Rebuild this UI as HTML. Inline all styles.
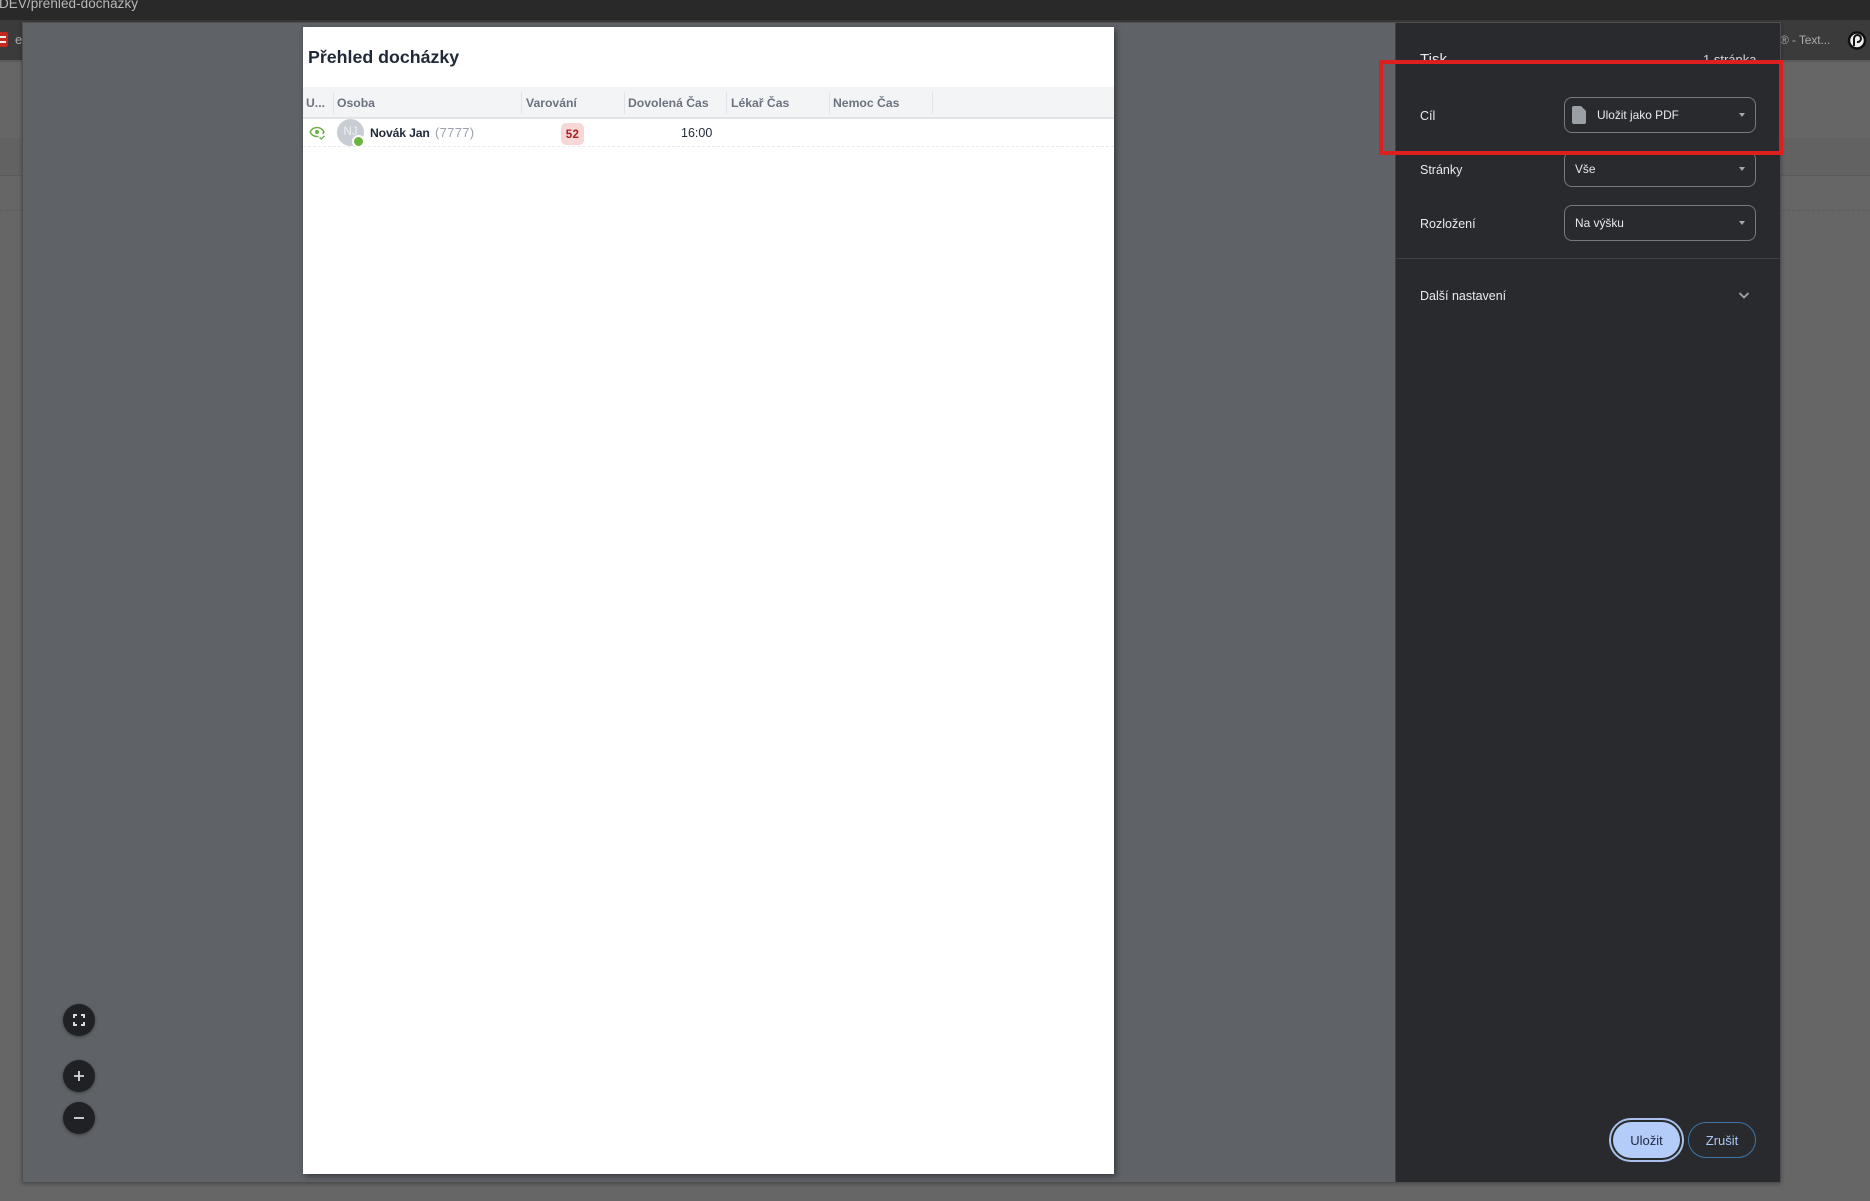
<!DOCTYPE html>
<html lang="cs"><head><meta charset="utf-8"><title>Tisk</title>
<style>
*{box-sizing:border-box;margin:0;padding:0}
html,body{width:1870px;height:1201px;overflow:hidden;background:#666;font-family:"Liberation Sans",sans-serif}
.a{position:absolute;white-space:nowrap}
.sel{position:absolute;left:1564px;width:192px;height:36px;border:1px solid #77797d;border-radius:8px;color:#e8eaed;font-size:11.9px;line-height:35px;padding-left:10px}
.sel i{position:absolute;right:10px;top:15px;width:0;height:0;border-left:3.500px solid transparent;border-right:3.500px solid transparent;border-top:4px solid #a5a7aa}
.lab{position:absolute;left:1420px;color:#e8eaed;font-size:12.5px;white-space:nowrap}
.th{position:absolute;top:95px;color:#6b7280;font-size:12.2px;font-weight:bold;line-height:16px;white-space:nowrap}
.sep{position:absolute;top:92px;width:1px;height:22px;background:#e1e3e8}
.fab{position:absolute;left:63px;width:32px;height:32px;border-radius:50%;background:#202124;box-shadow:0 1px 3px rgba(0,0,0,.4)}
</style></head><body>
<div class="a" style="left:0;top:0;width:1870px;height:20px;background:#292929"></div>
<div class="a" style="left:0;top:20px;width:1870px;height:40px;background:#3b3b3b"></div>
<div class="a" style="left:0;top:60px;width:1870px;height:2px;background:#5a5a5a"></div>
<div class="a" style="left:0;top:138px;width:1870px;height:37px;background:#626262"></div>
<div class="a" style="left:0;top:175px;width:1870px;height:1px;background:#5a5a5a"></div>
<div class="a" style="left:0;top:210px;width:1870px;border-top:1px dashed #5c5c5c"></div>
<div class="a" style="left:-1px;top:-4px;color:#b8b8b8;font-size:13.5px;line-height:16px;letter-spacing:.05px">DEV/přehled-docházky</div>
<div class="a" style="left:0;top:32px;width:8px;height:15px;background:#c5281f;border-radius:0 2px 2px 0"></div>
<div class="a" style="left:0;top:36px;width:6px;height:2px;background:#eee"></div>
<div class="a" style="left:0;top:41px;width:6px;height:2px;background:#eee"></div>
<div class="a" style="left:15px;top:32px;color:#aaa;font-size:13px">e</div>
<div class="a" style="left:1780px;top:32px;color:#aaa;font-size:12px;line-height:16px;letter-spacing:-.1px">® - Text...</div>
<svg class="a" style="left:1847px;top:31px" width="20" height="19" viewBox="0 0 20 19"><circle cx="10" cy="9.500" r="8" fill="#eee" stroke="#111" stroke-width="2.500"/><path d="M7 15V7.500a3.500 3.500 0 1 1 3 3.500" fill="none" stroke="#111" stroke-width="2"/></svg>

<div class="a" style="left:22px;top:22px;width:1759px;height:1161px;background:#5f6368;border:1px solid #4e4f50;box-shadow:0 1px 4px rgba(0,0,0,.3)"></div>
<div class="a" style="left:303px;top:27px;width:811px;height:1147px;background:#fff;box-shadow:2px 2px 6px rgba(0,0,0,.45)"></div>

<div class="a" style="left:308px;top:46px;color:#1f2937;font-size:17.8px;font-weight:bold;line-height:22px">Přehled docházky</div>
<div class="a" style="left:303px;top:87px;width:811px;height:30px;background:#f3f4f6"></div>
<div class="a" style="left:303px;top:117px;width:811px;height:2px;background:#e3e4e8"></div>
<div class="th" style="left:306px">U...</div>
<div class="sep" style="left:333px"></div>
<div class="th" style="left:337px">Osoba</div>
<div class="sep" style="left:521px"></div>
<div class="th" style="left:526px">Varování</div>
<div class="sep" style="left:624px"></div>
<div class="th" style="left:628px">Dovolená Čas</div>
<div class="sep" style="left:726px"></div>
<div class="th" style="left:731px">Lékař Čas</div>
<div class="sep" style="left:829px"></div>
<div class="th" style="left:833px">Nemoc Čas</div>
<div class="sep" style="left:932px"></div>

<svg class="a" style="left:309px;top:125px" width="17" height="16" viewBox="0 0 17 16" fill="none" stroke="#6aae45" stroke-width="1.500"><path d="M1 7C3 3.500 5.500 2.500 8 2.500S13 3.500 15 7C14.600 7.700 14.200 8.300 13.700 8.800M1 7C3 10.500 5.500 11.500 8 11.500 8.500 11.500 9 11.400 9.500 11.300"/><circle cx="8" cy="7" r="2" fill="#6aae45" stroke="none"/><path d="M10.500 12.500l1.800 1.500 3.200-3.200" stroke-width="1.300"/></svg>
<div class="a" style="left:337px;top:119px;width:27px;height:27px;border-radius:50%;background:#c8cdd4;color:#eef0f3;font-size:11.5px;line-height:27px;text-align:center">NJ</div>
<div class="a" style="left:352px;top:135px;width:13px;height:13px;border-radius:50%;background:#6cb33f;border:2px solid #fff"></div>
<div class="a" style="left:370px;top:125px;color:#1f2937;font-size:12.2px;font-weight:bold;line-height:16px;letter-spacing:-.15px">Novák Jan</div>
<div class="a" style="left:435px;top:125px;color:#9ca3af;font-size:13px;line-height:16px;letter-spacing:.3px">(7777)</div>
<div class="a" style="left:561px;top:123px;width:23px;height:22px;border-radius:5px;background:#f8d7d7;color:#a91e22;font-size:11.5px;font-weight:bold;line-height:24px;letter-spacing:.3px;text-align:center">52</div>
<div class="a" style="left:681px;top:125px;color:#1f2937;font-size:12.5px;line-height:16px">16:00</div>
<div class="a" style="left:303px;top:146px;width:811px;border-top:1px dashed #e9eaed"></div>

<div class="fab" style="top:1004px"><svg width="32" height="32" viewBox="0 0 32 32" fill="none" stroke="#d9dadc" stroke-width="2"><path d="M11 14V11H14M18 11H21V14M21 18V21H18M14 21H11V18"/></svg></div>
<div class="fab" style="top:1060px"><svg width="32" height="32" viewBox="0 0 32 32" fill="none" stroke="#d9dadc" stroke-width="1.800"><path d="M11 16H21M16 11V21"/></svg></div>
<div class="fab" style="top:1102px"><svg width="32" height="32" viewBox="0 0 32 32" fill="none" stroke="#d9dadc" stroke-width="1.800"><path d="M11 16H21"/></svg></div>

<div class="a" style="left:1395px;top:23px;width:385px;height:1159px;background:#292a2d;border-left:1px solid #3f4144"></div>
<div class="a" style="left:1420px;top:51px;color:#e8eaed;font-size:15px;line-height:18px">Tisk</div>
<div class="a" style="left:1703px;top:52px;color:#d5d7da;font-size:13px;line-height:16px">1 stránka</div>

<div class="lab" style="top:109px">Cíl</div>
<div class="sel" style="top:97px;padding-left:32px"><svg style="position:absolute;left:7px;top:8px" width="14" height="18" viewBox="0 0 14 18"><path d="M2 0H9L14 5V16a2 2 0 0 1-2 2H2a2 2 0 0 1-2-2V2A2 2 0 0 1 2 0Z" fill="#9aa0a6"/></svg>Uložit jako PDF<i></i></div>
<div class="lab" style="top:163px">Stránky</div>
<div class="sel" style="top:151px">Vše<i></i></div>
<div class="lab" style="top:217px">Rozložení</div>
<div class="sel" style="top:205px">Na výšku<i></i></div>
<div class="a" style="left:1396px;top:258px;width:384px;height:1px;background:#3f4144"></div>
<div class="lab" style="top:289px">Další nastavení</div>
<svg class="a" style="left:1738px;top:291px" width="12" height="9" viewBox="0 0 12 9" fill="none" stroke="#a5a7aa" stroke-width="1.700"><path d="M1.500 2L6 6.500 10.500 2"/></svg>

<div class="a" style="left:1609px;top:1118px;width:75px;height:44px;border-radius:22px;border:2px solid #a8c0ea;padding:2px"><div style="width:100%;height:100%;border-radius:18px;background:#b3ccf8;color:#202b45;font-size:13px;line-height:37px;text-align:center">Uložit</div></div>
<div class="a" style="left:1688px;top:1122px;width:68px;height:36px;border-radius:18px;border:1px solid #3e76a8;color:#a8c7fa;font-size:13px;line-height:36px;text-align:center">Zrušit</div>

<div class="a" style="left:1379px;top:60px;width:404px;height:95px;border:4px solid #dd1f1f"></div>
</body></html>
